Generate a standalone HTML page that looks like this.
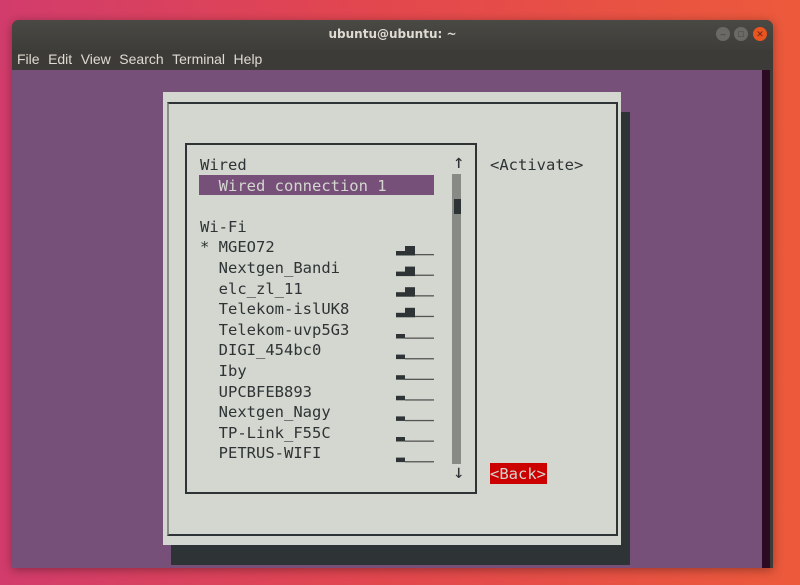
<!DOCTYPE html>
<html><head><style>
*{margin:0;padding:0;box-sizing:border-box}
body{width:800px;height:585px;overflow:hidden;position:relative;background:linear-gradient(90deg,#d23c6c 0%,#e2464f 45%,#ec5a3b 100%);font-family:"DejaVu Sans Mono","Liberation Mono",monospace}
.abs{position:absolute}
.win{left:12px;top:20px;width:761px;height:548px;background:#3c3b37;border-radius:7px 7px 0 0;box-shadow:0 2px 10px rgba(0,0,0,.35)}
.title{left:12px;top:20px;width:761px;height:30px;border-radius:7px 7px 0 0;background:linear-gradient(#4a4944,#3e3d39);color:#dfdbd2;font:bold 12px "DejaVu Sans","Liberation Sans",sans-serif;text-align:center;line-height:28px}
.menu{left:17px;top:51px;color:#dfdbd2;font:14px "Liberation Sans",sans-serif}
.menu span{margin-right:8.5px}
.term{left:12px;top:70px;width:751px;height:498px;background:#77507a}
.rstrip{left:762px;top:70px;width:8px;height:498px;background:#2c0a22}
.btn{width:14px;height:14px;border-radius:50%;top:27px;background:#6a6965;color:#3c3b37;font:9px sans-serif;text-align:center;line-height:14px}
.t{position:absolute;font-size:15.5px;line-height:20.6px;color:#2e3436;white-space:pre}
</style></head><body>
<div class="abs win"></div>
<div class="abs title">ubuntu@ubuntu: ~</div>
<div class="abs btn" style="left:716px">–</div>
<div class="abs btn" style="left:734px">□</div>
<div class="abs btn" style="left:753px;background:#e95420;color:#6b2410">✕</div>
<div class="abs menu"><span>File</span><span>Edit</span><span>View</span><span>Search</span><span>Terminal</span><span>Help</span></div>
<div class="abs term"></div>
<div class="abs rstrip"></div>
<div class="abs" style="left:171px;top:112px;width:459px;height:453px;background:#2e3436"></div>
<div class="abs" style="left:163px;top:92px;width:458px;height:453px;background:#d3d7cf"></div>
<div class="abs" style="left:167px;top:102px;width:451px;height:434px;border:2px solid #2e3436;border-left-color:#8a8c88"></div>
<div class="abs" style="left:185px;top:143px;width:292px;height:351px;border:2px solid #2e3436"></div>
<div class="abs" style="left:199px;top:175px;width:235px;height:20px;background:#77507a"></div>
<div class="abs" style="left:452px;top:174px;width:9px;height:290px;background:#888a85"></div>
<div class="abs" style="left:454px;top:199px;width:7px;height:15px;background:#2e3436"></div>
<div class="t" style="left:200px;top:155px">Wired
<span style="color:#d3d7cf">  Wired connection 1</span>

Wi-Fi
* MGEO72
  Nextgen_Bandi
  elc_zl_11
  Telekom-islUK8
  Telekom-uvp5G3
  DIGI_454bc0
  Iby
  UPCBFEB893
  Nextgen_Nagy
  TP-Link_F55C
  PETRUS-WIFI</div>
<div class="t" style="left:453px;top:152px;font-size:19px">↑</div>
<div class="t" style="left:453px;top:462px;font-size:19px">↓</div>
<div class="t" style="left:490px;top:155px">&lt;Activate&gt;</div>
<div class="abs" style="left:490px;top:463px;width:57px;height:21px;background:#cc0000"></div>
<div class="t" style="left:490px;top:464px;color:#d3d7cf">&lt;Back&gt;</div>
<svg class="abs" style="left:0;top:0" width="800" height="585">
<g fill="#2e3436">
<g id="s"><rect x="396" y="251" width="9" height="4.5"/><rect x="405" y="246" width="10" height="9.5"/><rect x="415" y="254" width="19" height="1.3" fill="#555"/></g>
<use href="#s" y="20.6"/><use href="#s" y="41.2"/><use href="#s" y="61.8"/>
<g id="w"><rect x="396" y="334" width="9" height="4.5"/><rect x="405" y="337.5" width="29" height="1.3" fill="#555"/></g>
<use href="#w" y="20.6"/><use href="#w" y="41.2"/><use href="#w" y="61.8"/><use href="#w" y="82.4"/><use href="#w" y="103"/><use href="#w" y="123.6"/>
</g>
</svg>
</body></html>
